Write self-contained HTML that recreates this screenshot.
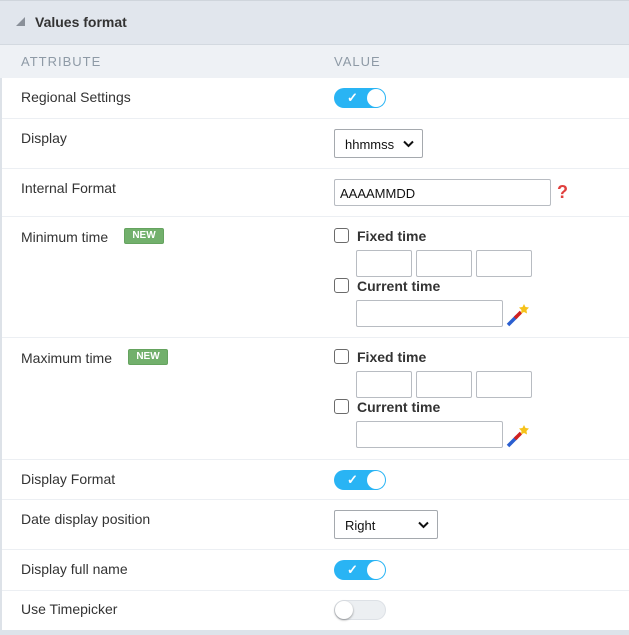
<!DOCTYPE html>
<html><head><style>
*{margin:0;padding:0;box-sizing:border-box}
body{width:629px;height:635px;background:#fff;font-family:"Liberation Sans",sans-serif;position:relative;overflow:hidden;color:#333}
.a{position:absolute}
.lbl{position:absolute;left:21px;font-size:14px;color:#333}
.sep{position:absolute;left:2px;right:0;height:1px;background:#eceff3}
.tog{position:absolute;left:334px;width:52px;height:20px;border-radius:10px;background:#29b4f4}
.tog .k{position:absolute;right:1px;top:1px;width:18px;height:18px;border-radius:50%;background:#fff}
.tog .c{position:absolute;left:13px;top:2px;color:#fff;font-size:13px;font-weight:bold}
.off{background:#eceff2;border:1px solid #dde1e6}
.off .k{left:0;top:0;right:auto;box-shadow:0 1px 2px rgba(0,0,0,.4)}
.inp{position:absolute;height:27px;border:1px solid #b8bcc2;border-radius:2px;background:#fff}
.sel{position:absolute;height:29px;border:1px solid #a5a9ae;border-radius:2px;background:#fff;font-size:13px;color:#111;padding:7px 0 0 10px}
.sel svg{position:absolute;right:8px;top:10px}
.cb{position:absolute;left:334px;width:15px;height:15px;border:1.5px solid #6b6b6b;border-radius:3px}
.cbt{position:absolute;left:357px;font-size:14px;font-weight:bold;color:#333}
.new{position:absolute;height:16px;width:40px;background:#72b06c;border:1px solid #65a35f;border-radius:2px;color:#fff;font-size:10px;font-weight:bold;text-align:center;line-height:14px}
</style></head><body>
<div class="a" style="left:0;top:0;width:629px;height:45px;background:#e1e6ed;border-top:1px solid #cfd5dc;border-bottom:1px solid #d3d9e0"></div>
<div class="a" style="left:16px;top:17px;width:0;height:0;border-left:9px solid transparent;border-bottom:9px solid #8a9099"></div>
<div class="a" style="left:35px;top:14px;font-size:14px;font-weight:bold;color:#333">Values format</div>
<div class="a" style="left:0;top:45px;width:629px;height:33px;background:#eef1f5"></div>
<div class="a" style="left:21px;top:54px;font-size:13px;color:#8e9aa6;letter-spacing:1px">ATTRIBUTE</div>
<div class="a" style="left:334px;top:54px;font-size:13px;color:#8e9aa6;letter-spacing:1px">VALUE</div>
<div class="a" style="left:0;top:78px;width:2px;height:552px;background:#dde2e8"></div>

<div class="lbl" style="top:89px">Regional Settings</div>
<div class="tog" style="top:88px"><span class="c">✓</span><span class="k"></span></div>
<div class="sep" style="top:118px"></div>

<div class="lbl" style="top:130px">Display</div>
<div class="sel" style="left:334px;top:129px;width:89px">hhmmss<svg width="11" height="8"><path d="M1 1.5L5.5 6 10 1.5" fill="none" stroke="#111" stroke-width="2"/></svg></div>
<div class="sep" style="top:168px"></div>

<div class="lbl" style="top:180px">Internal Format</div>
<div class="inp" style="left:334px;top:179px;width:217px;font-size:13px;color:#111;padding:6px 0 0 5px">AAAAMMDD</div>
<div class="a" style="left:557px;top:182px;color:#e0403e;font-weight:bold;font-size:18px">?</div>
<div class="sep" style="top:216px"></div>

<div class="lbl" style="top:229px">Minimum time</div>
<div class="new" style="left:124px;top:228px">NEW</div>
<div class="cb" style="top:228px"></div><div class="cbt" style="top:228px">Fixed time</div>
<div class="inp" style="left:356px;top:250px;width:56px"></div>
<div class="inp" style="left:416px;top:250px;width:56px"></div>
<div class="inp" style="left:476px;top:250px;width:56px"></div>
<div class="cb" style="top:278px"></div><div class="cbt" style="top:278px">Current time</div>
<div class="inp" style="left:356px;top:300px;width:147px"></div>
<svg class="a" style="left:506px;top:303px" width="24" height="24"><line x1="2" y1="22" x2="11" y2="13" stroke="#2b5fd0" stroke-width="3.5"/><line x1="9" y1="15" x2="15" y2="9" stroke="#d02020" stroke-width="3.5"/><path d="M18 1l1.5 3 3.5 0.5-2.5 2.5 0.5 3.5-3-1.5-3 1.5 0.5-3.5-2.5-2.5 3.5-0.5z" fill="#f6c21a"/></svg>
<div class="sep" style="top:337px"></div>

<div class="lbl" style="top:350px">Maximum time</div>
<div class="new" style="left:128px;top:349px">NEW</div>
<div class="cb" style="top:349px"></div><div class="cbt" style="top:349px">Fixed time</div>
<div class="inp" style="left:356px;top:371px;width:56px"></div>
<div class="inp" style="left:416px;top:371px;width:56px"></div>
<div class="inp" style="left:476px;top:371px;width:56px"></div>
<div class="cb" style="top:399px"></div><div class="cbt" style="top:399px">Current time</div>
<div class="inp" style="left:356px;top:421px;width:147px"></div>
<svg class="a" style="left:506px;top:424px" width="24" height="24"><line x1="2" y1="22" x2="11" y2="13" stroke="#2b5fd0" stroke-width="3.5"/><line x1="9" y1="15" x2="15" y2="9" stroke="#d02020" stroke-width="3.5"/><path d="M18 1l1.5 3 3.5 0.5-2.5 2.5 0.5 3.5-3-1.5-3 1.5 0.5-3.5-2.5-2.5 3.5-0.5z" fill="#f6c21a"/></svg>
<div class="sep" style="top:459px"></div>

<div class="lbl" style="top:471px">Display Format</div>
<div class="tog" style="top:470px"><span class="c">✓</span><span class="k"></span></div>
<div class="sep" style="top:499px"></div>

<div class="lbl" style="top:511px">Date display position</div>
<div class="sel" style="left:334px;top:510px;width:104px">Right<svg width="11" height="8"><path d="M1 1.5L5.5 6 10 1.5" fill="none" stroke="#111" stroke-width="2"/></svg></div>
<div class="sep" style="top:549px"></div>

<div class="lbl" style="top:561px">Display full name</div>
<div class="tog" style="top:560px"><span class="c">✓</span><span class="k"></span></div>
<div class="sep" style="top:590px"></div>

<div class="lbl" style="top:601px">Use Timepicker</div>
<div class="tog off" style="top:600px"><span class="k"></span></div>
<div class="a" style="left:0;top:630px;width:629px;height:5px;background:#dde3ea"></div>
</body></html>
